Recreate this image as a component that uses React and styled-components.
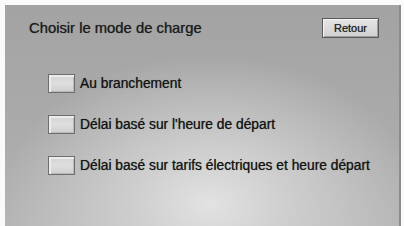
import React from "react";
import styled, { createGlobalStyle } from "styled-components";

const GlobalStyle = createGlobalStyle`
  html, body {
    margin: 0;
    padding: 0;
    background: #ffffff;
    width: 404px;
    height: 226px;
    overflow: hidden;
  }
`;

const Frame = styled.div`
  box-sizing: border-box;
  width: 404px;
  height: 226px;
  padding: 5px 3px 0 5px;
  background: #fafafa;
`;

const Screen = styled.div`
  box-sizing: border-box;
  height: 100%;
  display: flex;
  flex-direction: column;
  padding: 8px 22px 0 24px;
  border-right: 2px solid #8c8c8c;
  background:
    radial-gradient(ellipse 210px 150px at 205px 200px, #e2e2e2 0%, #cfcfcf 35%, rgba(175, 175, 175, 0) 100%),
    linear-gradient(180deg, #a3a3a3 0%, #ababab 60%, #b4b4b4 100%);
  font-family: "Liberation Sans", Arial, sans-serif;
  color: #1c1c1c;
  text-shadow: 0 0 0.7px rgba(0, 0, 0, 0.6);
`;

const Header = styled.div`
  display: flex;
  align-items: center;
  justify-content: space-between;
  height: 30px;
`;

const Title = styled.h1`
  margin: 0;
  font-size: 14.8px;
  font-weight: normal;
`;

const BackButton = styled.button`
  box-sizing: border-box;
  width: 57px;
  height: 20px;
  margin-right: -2px;
  padding: 0;
  border: 1px solid #5a5a5a;
  background: linear-gradient(180deg, #e6e6e6 0%, #d0d0d0 100%);
  box-shadow: inset 1px 1px 0 #f4f4f4, inset -1px -1px 0 #9c9c9c;
  font-family: inherit;
  font-size: 11px;
  color: #222222;
  text-shadow: 0 0 0.7px rgba(0, 0, 0, 0.6);
`;

const Options = styled.div`
  display: flex;
  flex-direction: column;
  gap: 22px;
  padding: 31px 0 0 19px;
`;

const Option = styled.label`
  display: flex;
  align-items: center;
  gap: 5px;
  font-size: 13.8px;
  color: #141414;
`;

const Box = styled.span`
  box-sizing: border-box;
  width: 27px;
  height: 19px;
  border: 1px solid #6e6e6e;
  background: linear-gradient(180deg, #d4d4d4 0%, #dedede 50%, #cfcfcf 100%);
  box-shadow: inset 2px 2px 0 #ececec, inset -1px -1px 0 #b8b8b8;
`;

const options = [
  "Au branchement",
  "Délai basé sur l'heure de départ",
  "Délai basé sur tarifs électriques et heure départ",
];

export default function App() {
  return (
    <>
      <GlobalStyle />
      <Frame>
        <Screen>
          <Header>
            <Title>Choisir le mode de charge</Title>
            <BackButton>Retour</BackButton>
          </Header>
          <Options>
            {options.map((text) => (
              <Option key={text}>
                <Box />
                {text}
              </Option>
            ))}
          </Options>
        </Screen>
      </Frame>
    </>
  );
}
